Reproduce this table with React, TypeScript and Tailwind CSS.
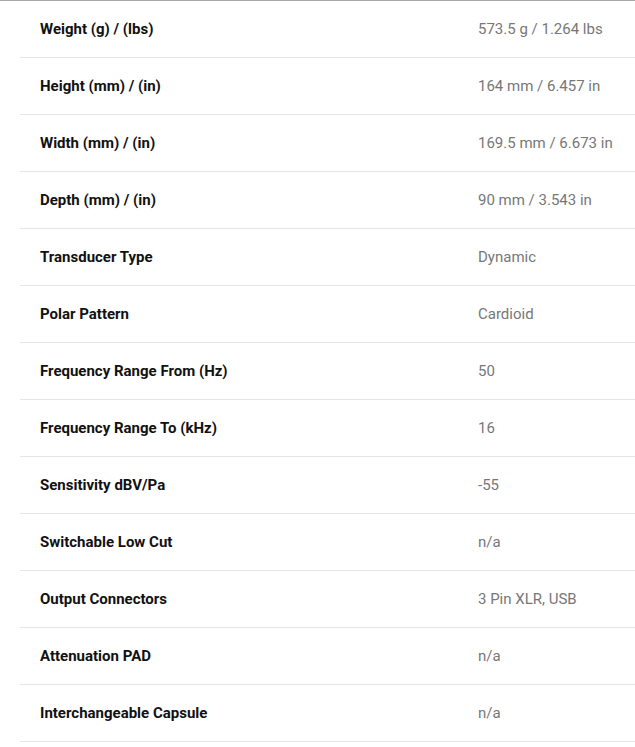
const specs: [string, string][] = [
  ["Weight (g) / (lbs)", "573.5 g / 1.264 lbs"],
  ["Height (mm) / (in)", "164 mm / 6.457 in"],
  ["Width (mm) / (in)", "169.5 mm / 6.673 in"],
  ["Depth (mm) / (in)", "90 mm / 3.543 in"],
  ["Transducer Type", "Dynamic"],
  ["Polar Pattern", "Cardioid"],
  ["Frequency Range From (Hz)", "50"],
  ["Frequency Range To (kHz)", "16"],
  ["Sensitivity dBV/Pa", "-55"],
  ["Switchable Low Cut", "n/a"],
  ["Output Connectors", "3 Pin XLR, USB"],
  ["Attenuation PAD", "n/a"],
  ["Interchangeable Capsule", "n/a"],
];

export default function App() {
  return (
    <div className="min-h-[747px] w-[635px] overflow-hidden bg-white font-['Roboto',sans-serif]">
      <div className="border-t border-[#a8a8a8] pl-5">
        {specs.map(([label, value]) => (
          <div
            key={label}
            className="flex h-[57px] items-center border-b border-[#e6e6e6] text-[15px]"
          >
            <div className="w-[458px] pl-5 font-bold text-[#111]">{label}</div>
            <div className="text-[#777]">{value}</div>
          </div>
        ))}
      </div>
    </div>
  );
}
